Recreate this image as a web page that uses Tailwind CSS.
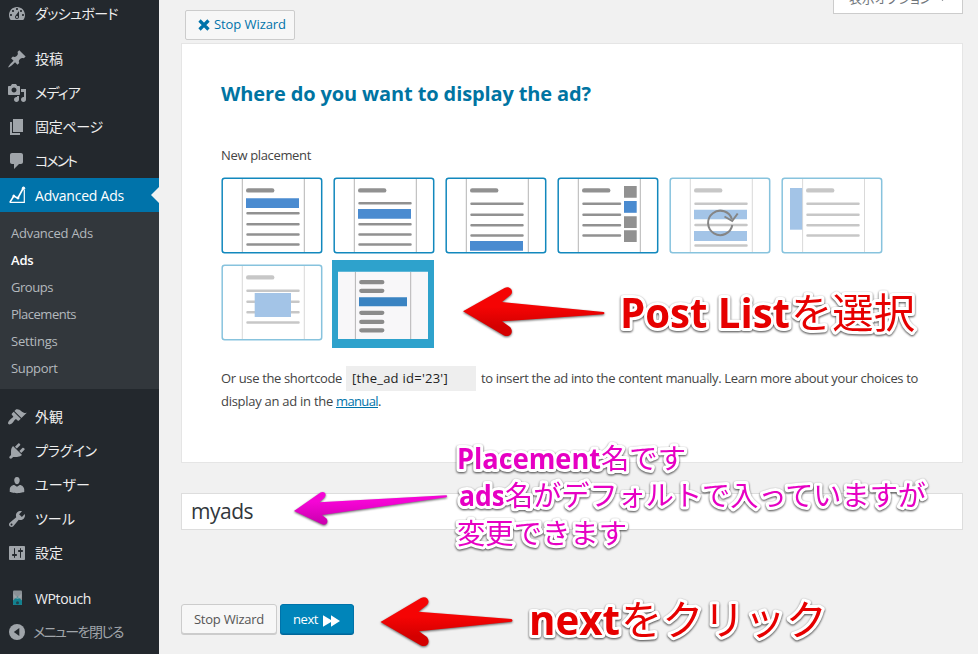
<!DOCTYPE html>
<html lang="ja">
<head>
<meta charset="utf-8">
<title>Advanced Ads</title>
<script src="https://cdn.jsdelivr.net/npm/@tailwindcss/browser@4"></script>
</head>
<body class="w-[978px] h-[654px] overflow-hidden bg-[#f1f1f1] font-['Open_Sans','Noto_Sans_CJK_JP',sans-serif] text-[13px] text-[#444]">
<div class="relative flex w-[978px] h-[654px] overflow-hidden">

  <nav class="w-[159px] h-[654px] shrink-0 bg-[#23282d] overflow-hidden text-[14px] text-[#eee] whitespace-nowrap">
    <a class="flex items-center h-[34px] -mt-[3px] pl-[7px] gap-2"><svg class="w-5 h-5 shrink-0 fill-[#a0a5aa]" viewBox="0 0 20 20"><path fill-rule="evenodd" d="M3.76 16h12.48c1.1-1.37 1.76-3.11 1.76-5 0-4.42-3.58-8-8-8s-8 3.58-8 8c0 1.89.66 3.63 1.76 5zM10 4c.55 0 1 .45 1 1s-.45 1-1 1-1-.45-1-1 .45-1 1-1zM6 6c.55 0 1 .45 1 1s-.45 1-1 1-1-.45-1-1 .45-1 1-1zm8 0c.55 0 1 .45 1 1s-.45 1-1 1-1-.45-1-1 .45-1 1-1zm-5.37 5.55L12 7v6c0 1.1-.9 2-2 2s-2-.9-2-2c0-.57.24-1.08.63-1.45zM4 10c.55 0 1 .45 1 1s-.45 1-1 1-1-.45-1-1 .45-1 1-1zm12 0c.55 0 1 .45 1 1s-.45 1-1 1-1-.45-1-1 .45-1 1-1zm-5 3c0-.55-.45-1-1-1s-1 .45-1 1 .45 1 1 1 1-.45 1-1z"/></svg><span class="pb-[2px]" data-w="83">ダッシュボード</span></a>
    <a class="flex items-center h-[34px] mt-[11px] pl-[7px] gap-2"><svg class="w-5 h-5 shrink-0 fill-[#a0a5aa]" viewBox="0 0 20 20"><path d="M10.44 3.02l1.82-1.82 6.36 6.35-1.83 1.82c-1.05-.68-2.48-.57-3.41.36l-.75.75c-.92.93-1.04 2.35-.35 3.41l-1.83 1.82-2.41-2.41-2.8 2.79c-.42.42-3.38 2.71-3.8 2.29s1.86-3.39 2.28-3.81l2.79-2.79L4.1 9.36l1.83-1.82c1.05.69 2.48.57 3.4-.36l.75-.75c.93-.92 1.05-2.35.36-3.41z"/></svg><span class="pb-[2px]" data-w="28">投稿</span></a>
    <a class="flex items-center h-[34px] pl-[7px] gap-2"><svg class="w-5 h-5 shrink-0 fill-[#a0a5aa]" viewBox="0 0 20 20"><path fill-rule="evenodd" d="M13 11V4c0-.55-.45-1-1-1h-1.67L9 1H5L3.67 3H2c-.55 0-1 .45-1 1v7c0 .55.45 1 1 1h10c.55 0 1-.45 1-1zM7 4.5c1.38 0 2.5 1.12 2.5 2.5S8.38 9.5 7 9.5 4.5 8.38 4.5 7 5.62 4.5 7 4.5zM14 6h5v10.5c0 1.38-1.12 2.5-2.5 2.5S14 17.88 14 16.5s1.12-2.5 2.5-2.5c.17 0 .34.02.5.05V9h-3V6zm-4 8.05V13h2v3.5c0 1.38-1.12 2.5-2.5 2.5S7 17.88 7 16.5 8.12 14 9.5 14c.17 0 .34.02.5.05z"/></svg><span class="pb-[2px]" data-w="45">メディア</span></a>
    <a class="flex items-center h-[34px] pl-[7px] gap-2"><svg class="w-5 h-5 shrink-0 fill-[#a0a5aa]" viewBox="0 0 20 20"><path d="M6 15V2h10v13H6zm-1 1h8v2H3V5h2v11z"/></svg><span class="pb-[2px]" data-w="68">固定ページ</span></a>
    <a class="flex items-center h-[34px] pl-[7px] gap-2"><svg class="w-5 h-5 shrink-0 fill-[#a0a5aa]" viewBox="0 0 20 20"><path d="M5 2h9c1.1 0 2 .9 2 2v7c0 1.1-.9 2-2 2h-2l-5 5v-5H5c-1.1 0-2-.9-2-2V4c0-1.1.9-2 2-2z"/></svg><span class="pb-[2px]" data-w="41">コメント</span></a>
    <a class="relative flex items-center h-[34px] pl-[7px] gap-2 bg-[#0073aa] text-white"><svg class="w-5 h-5 shrink-0" viewBox="0 0 20 20" fill="none" stroke="#fff"><path stroke-width="1.6" d="M3 17.2 6.8 11l4 2.2L15.8 4"/><path stroke-width="1.2" d="M2.6 17.4H17.3V5"/><circle cx="6.8" cy="11" r="1" fill="#fff"/><circle cx="11" cy="13" r="1" fill="#fff"/><circle cx="16.5" cy="3.3" r="1.3" fill="#fff"/></svg><span data-w="89">Advanced Ads</span>
      <i class="absolute right-0 top-[9px] border-y-8 border-r-8 border-y-transparent border-r-[#f1f1f1]"></i></a>
    <div class="h-[177px] pt-2 pl-[11px] bg-[#32373c] text-[13px] text-[#b4b9be] leading-[27px]">
      <div><span data-w="82">Advanced Ads</span></div>
      <div class="font-semibold text-white"><span data-w="22.5">Ads</span></div>
      <div><span data-w="42">Groups</span></div>
      <div><span data-w="65">Placements</span></div>
      <div><span data-w="46.5">Settings</span></div>
      <div><span data-w="46.5">Support</span></div>
    </div>
    <a class="flex items-center h-[34px] mt-[11px] pl-[7px] gap-2"><svg class="w-5 h-5 shrink-0 fill-[#a0a5aa]" viewBox="0 0 20 20"><path d="M14.48 11.06L7.41 3.99l1.5-1.5c.5-.56 2.3-.47 3.51.32 1.21.8 1.43 1.28 2.91 2.1 1.18.64 2.45 1.26 4.45.85zm-.71.71L6.7 4.7 4.93 6.47c-.39.39-.39 1.02 0 1.41l1.06 1.06c.39.39.39 1.03 0 1.42-.6.6-1.43 1.11-2.21 1.69-.35.26-.7.53-1.01.84C1.43 14.23.4 16.08 1.4 17.07c.99 1 2.84-.03 4.18-1.36.31-.31.58-.66.85-1.02.57-.78 1.08-1.61 1.69-2.21.39-.39 1.02-.39 1.41 0l1.06 1.06c.39.39 1.02.39 1.41 0z"/></svg><span class="pb-[2px]" data-w="28">外観</span></a>
    <a class="flex items-center h-[34px] pl-[7px] gap-2"><svg class="w-5 h-5 shrink-0 fill-[#a0a5aa]" viewBox="0 0 20 20"><path d="M13.11 4.36L9.87 7.6 8 5.73l3.24-3.24c.35-.34 1.05-.2 1.56.32.52.51.66 1.21.31 1.55zm-8 1.77l.91-1.12 9.01 9.01-1.19.84c-.71.71-2.63 1.16-3.82 1.16H6.14L4.9 17.26c-.59.59-1.54.59-2.12 0-.59-.58-.59-1.53 0-2.12l1.24-1.24v-3.88c0-1.13.4-3.19 1.09-3.89zm7.26 3.97l3.24-3.24c.34-.35 1.04-.21 1.55.31.52.51.66 1.21.31 1.55l-3.24 3.25z"/></svg><span class="pb-[2px]" data-w="62">プラグイン</span></a>
    <a class="flex items-center h-[34px] pl-[7px] gap-2"><svg class="w-5 h-5 shrink-0 fill-[#a0a5aa]" viewBox="0 0 20 20"><path d="M10 9.25c-2.27 0-2.73-3.44-2.73-3.44C7 4.02 7.82 2 9.97 2c2.16 0 2.98 2.02 2.71 3.81 0 0-.41 3.44-2.68 3.44zm0 2.57L12.72 10c2.39 0 4.52 2.33 4.52 4.53v2.49s-3.65 1.13-7.24 1.13c-3.65 0-7.24-1.13-7.24-1.13v-2.49c0-2.25 1.94-4.48 4.47-4.48z"/></svg><span class="pb-[2px]" data-w="55">ユーザー</span></a>
    <a class="flex items-center h-[34px] pl-[7px] gap-2"><svg class="w-5 h-5 shrink-0 fill-[#a0a5aa]" viewBox="0 0 20 20"><path fill-rule="evenodd" d="M16.68 9.77c-1.34 1.34-3.3 1.67-4.95.99l-5.41 6.52c-.99.99-2.59.99-3.58 0s-.99-2.59 0-3.57l6.52-5.42c-.68-1.65-.35-3.61.99-4.95 1.28-1.28 3.12-1.62 4.72-1.06l-2.89 2.89 2.82 2.82 2.86-2.87c.53 1.58.18 3.39-1.08 4.65zM3.81 16.21c.4.39 1.04.39 1.43 0 .4-.4.4-1.04 0-1.43-.39-.4-1.03-.4-1.43 0-.39.39-.39 1.03 0 1.43z"/></svg><span class="pb-[2px]" data-w="40">ツール</span></a>
    <a class="flex items-center h-[34px] pl-[7px] gap-2"><svg class="w-5 h-5 shrink-0 fill-[#a0a5aa]" viewBox="0 0 20 20"><path fill-rule="evenodd" d="M18 16V4c0-.55-.45-1-1-1H3c-.55 0-1 .45-1 1v12c0 .55.45 1 1 1h14c.55 0 1-.45 1-1zM8 11h1c.55 0 1 .45 1 1s-.45 1-1 1H8v1.5c0 .28-.22.5-.5.5s-.5-.22-.5-.5V13H6c-.55 0-1-.45-1-1s.45-1 1-1h1V5.5c0-.28.22-.5.5-.5s.5.22.5.5V11zm5-2h-1c-.55 0-1-.45-1-1s.45-1 1-1h1V5.5c0-.28.22-.5.5-.5s.5.22.5.5V7h1c.55 0 1 .45 1 1s-.45 1-1 1h-1v5.5c0 .28-.22.5-.5.5s-.5-.22-.5-.5V9z"/></svg><span class="pb-[2px]" data-w="28">設定</span></a>
    <a class="flex items-center h-[34px] mt-[11px] pl-[7px] gap-2"><svg class="w-5 h-5 shrink-0" viewBox="0 0 20 20"><rect x="6" y="2.5" width="9" height="14.5" rx="1" fill="#8b9196"/><path fill="#12818f" d="M6 12.5 10.5 8.5 15 12.5V16a1 1 0 0 1-1 1H7a1 1 0 0 1-1-1z"/><path fill="#a8b0b4" d="M6.5 5.5 10.5 9.5l4-4v4l-4 1.5-4-1.5z" opacity=".6"/><circle cx="10.5" cy="14.8" r="1.5" fill="#23404a"/></svg><span data-w="56">WPtouch</span></a>
    <a class="flex items-center h-[34px] pl-[7px] gap-[6px] text-[#a0a5aa]"><svg class="w-5 h-5 shrink-0" viewBox="0 0 20 20"><circle cx="10" cy="10" r="8" fill="#a0a5aa"/><path fill="#23282d" d="M12.3 6v8L6.8 10z"/></svg><span class="pb-[2px]" data-w="90">メニューを閉じる</span></a>
  </nav>

  <main class="relative flex-1 pl-[22px] pr-[15px]">
    <div class="absolute right-[15px] -top-[16px] w-[130px] h-[30px] border border-[#ccc] bg-white pl-[15px] flex items-center text-[#72777c] whitespace-nowrap"><span data-w="82">表示オプション</span><svg class="ml-[7px] w-[9px] h-[6px]" viewBox="0 0 9 6"><path d="M1 1h7L4.500 5z" fill="#72777c"/></svg></div>
    <div class="pt-[10px] pl-1">
      <a class="flex items-center w-[110px] h-[30px] pl-3 gap-1 rounded-[2px] border border-[#ccc] bg-[#f7f7f7] text-[#0073aa] whitespace-nowrap"><svg class="w-3 h-3 shrink-0" viewBox="0 0 12 12"><path d="M1.500 1.500l9 9M10.500 1.500l-9 9" stroke="#0073aa" stroke-width="3.200"/></svg><span data-w="72">Stop Wizard</span></a>
    </div>

    <section class="mt-[3px] h-[420px] w-[782px] border border-[#e5e5e5] bg-white pl-[39px] pt-[35px] whitespace-nowrap">
      <h2 class="text-[20px] leading-[30px] font-bold text-[#0074a2]"><span data-w="370">Where do you want to display the ad?</span></h2>
      <p class="mt-[36px] leading-5"><span data-w="90">New placement</span></p>
      <div class="mt-3 flex flex-wrap gap-[10px] w-[670px]">
        <svg class="w-[102px] h-[77px]" viewBox="0 0 102 77"><rect x="1.200" y="1.200" width="99.500" height="74.500" rx="2.500" fill="#fff" stroke="#1288bd" stroke-width="1.500"/><path d="M21.300 2v73M83.300 2v73" stroke="#b5b5b5"/><g stroke="#919191" stroke-linecap="round"><path stroke-width="4.400" d="M27.200 13.400h24"/><path stroke-width="2.500" d="M26.500 36.300h51M26.500 47.300h51M26.500 57.600h51M26.500 67.600h51"/></g><path fill="#4a8bd0" d="M25 21.300h53v9.700H25z"/></svg>
        <svg class="w-[102px] h-[77px]" viewBox="0 0 102 77"><rect x="1.200" y="1.200" width="99.500" height="74.500" rx="2.500" fill="#fff" stroke="#1288bd" stroke-width="1.500"/><path d="M21.300 2v73M83.300 2v73" stroke="#b5b5b5"/><g stroke="#919191" stroke-linecap="round"><path stroke-width="4.400" d="M27.200 13.400h24"/><path stroke-width="2.500" d="M26.500 26.200h51M26.500 47.300h51M26.500 57.600h51M26.500 67.600h51"/></g><path fill="#4a8bd0" d="M25 32h53v9.700H25z"/></svg>
        <svg class="w-[102px] h-[77px]" viewBox="0 0 102 77"><rect x="1.200" y="1.200" width="99.500" height="74.500" rx="2.500" fill="#fff" stroke="#1288bd" stroke-width="1.500"/><path d="M21.300 2v73M83.300 2v73" stroke="#b5b5b5"/><g stroke="#919191" stroke-linecap="round"><path stroke-width="4.400" d="M27.200 13.400h24"/><path stroke-width="2.500" d="M26.500 26.700h51M26.500 37.700h51M26.500 48.300h51M26.500 58.400h51"/></g><path fill="#4a8bd0" d="M25 64h53v9.700H25z"/></svg>
        <svg class="w-[102px] h-[77px]" viewBox="0 0 102 77"><rect x="1.200" y="1.200" width="99.500" height="74.500" rx="2.500" fill="#fff" stroke="#1288bd" stroke-width="1.500"/><path d="M21.300 2v73M83.300 2v73" stroke="#b5b5b5"/><g stroke="#919191" stroke-linecap="round"><path stroke-width="4.400" d="M27.200 13.400h24"/><path stroke-width="2.500" d="M26.500 26.700h36.500M26.500 37.700h36.500M26.500 48.300h36.500M26.500 58.400h36.500"/></g><path fill="#919191" d="M67 9h12.700v11.800H67zM67 39.300h12.700v11.800H67zM67 53.300h12.700v11.800H67z"/><path fill="#4a8bd0" d="M67 24h12.700v11.800H67z"/></svg>
        <svg class="w-[102px] h-[77px]" viewBox="0 0 102 77"><g opacity=".5"><rect x="1.200" y="1.200" width="99.500" height="74.500" rx="2.500" fill="#fff" stroke="#1288bd" stroke-width="1.500"/><path d="M21.300 2v73M83.300 2v73" stroke="#b5b5b5"/><g stroke="#919191" stroke-linecap="round"><path stroke-width="4.400" d="M27.200 13.400h24"/><path stroke-width="2.500" d="M26.500 26.700h51M26.500 48h51M26.500 68.500h51"/></g><path fill="#4a8bd0" d="M25 32.700h53v9.500H25zM25 54h53v10H25z"/></g><g fill="none" stroke="#858585" stroke-width="2"><path d="M63.300 48A12.200 12.200 0 1 1 63 42.500"/><path d="M55.500 39.500l7.700 4.500 5.500-7.500"/></g></svg>
        <svg class="w-[102px] h-[77px] opacity-50" viewBox="0 0 102 77"><rect x="1.200" y="1.200" width="99.500" height="74.500" rx="2.500" fill="#fff" stroke="#1288bd" stroke-width="1.500"/><path d="M21.600 2v73M83.500 2v73" stroke="#b5b5b5"/><g stroke="#919191" stroke-linecap="round"><path stroke-width="4.400" d="M27.200 13.400h24"/><path stroke-width="2.500" d="M26.500 26.700h51M26.500 37.700h51M26.500 48.300h51M26.500 58.400h51"/></g><path fill="#4a8bd0" d="M9 11h12.200v41.700H9z"/></svg>
        <svg class="w-[102px] h-[77px] opacity-50" viewBox="0 0 102 77"><rect x="1.200" y="1.200" width="99.500" height="74.500" rx="2.500" fill="#fff" stroke="#1288bd" stroke-width="1.500"/><path d="M21.300 2v73M83.300 2v73" stroke="#b5b5b5"/><g stroke="#919191" stroke-linecap="round"><path stroke-width="4.400" d="M27.200 13.400h24"/><path stroke-width="2.500" d="M26.500 26.700h51M26.500 37.700h51M26.500 48.300h51M26.500 58.400h51"/></g><path fill="#4a8bd0" d="M33.700 29H70v24H33.700z"/></svg>
        <svg class="w-[102px] h-[77px] overflow-visible" viewBox="0 0 102 77"><path fill="#2ea2cc" d="M-1-4h102v88H-1z"/><path fill="#f8f7f9" d="M5 7.700h90V75H5z"/><path d="M22.400 8v67M77.700 8v67" stroke="#b5b3b5"/><g stroke="#8b8b8b" stroke-width="4.300" stroke-linecap="round"><path d="M28.300 18.200h21M28.300 26.800h21M28.300 48.800h21M28.300 57.900h21M28.300 66.300h21"/></g><path fill="#3a83c2" d="M26 33.300h48v9H26z"/></svg>
      </div>
      <div class="mt-[25px] flex items-center h-[25px]"><span data-w="121">Or use the shortcode</span><span class="ml-1 mr-[5px] w-[130px] h-[25px] pl-[6px] leading-[25px] bg-[#eee] text-[#222]"><span data-w="96">[the_ad id='23']</span></span><span data-w="437">to insert the ad into the content manually. Learn more about your choices to</span></div>
      <div class="leading-5 flex"><span class="mr-[3px]" data-w="112">display an ad in the</span><a class="underline text-[#0073aa]"><span data-w="42">manual</span></a>.</div>
    </section>

    <div class="mt-[30px] w-[782px] h-[37px] border border-[#ddd] bg-white pl-[9px] flex items-center text-[21px] text-[#32373c]"><span data-w="62">myads</span></div>

    <div class="mt-[74px] flex gap-[3px] whitespace-nowrap">
      <button class="w-[96px] h-[30px] pt-px rounded-[3px] border border-[#ccc] bg-[#f7f7f7] text-[#555] shadow-[0_1px_0_#ccc]"><span data-w="70">Stop Wizard</span></button>
      <button class="w-[74px] h-[30px] pt-px rounded-[3px] border border-[#0073aa] bg-[#0085ba] text-white shadow-[0_1px_0_#006799] flex items-center pl-3 gap-[5px]"><span data-w="25">next</span><svg class="w-[17px] h-3 mt-[2px]" viewBox="0 0 17 12"><path fill="#fff" d="M0 .3 8 5V.3L17 6 8 11.700V7L0 11.700z"/></svg></button>
    </div>
  </main>

  <svg class="absolute left-0 top-0 w-[978px] h-[654px] pointer-events-none" viewBox="0 0 978 654">
    <defs>
      <linearGradient id="red" x1="0" y1="0" x2="0" y2="1"><stop offset=".4" stop-color="#f50404"/><stop offset=".8" stop-color="#d40000"/></linearGradient>
      <linearGradient id="pink" x1="0" y1="0" x2="0" y2="1"><stop offset=".3" stop-color="#f505d5"/><stop offset=".9" stop-color="#cf00b2"/></linearGradient>
    </defs>
    <g class="drop-shadow-[0_1px_1px_rgba(0,0,0,0.6)]">
      <path fill="url(#red)" d="M463 311.300 504.500 288C510 285 514.500 291.500 510.500 295L502 302 603.500 312Q605.500 313 603.500 314.300L502 321.300 510 327C514.500 332 510 338 504 335.500Z"/>
      <path fill="url(#red)" d="M380.500 622 421 598C426.500 595 431 601 427 605L418.500 611.800 511.500 619Q513.500 620.500 511.500 621.700L419 631.300 427 637C431 642.500 427 648 421 645.500Z"/>
      <path fill="url(#pink)" d="M294 511 320.500 492.500C324 490.500 327.500 494 324.500 497.500L319.500 502.300 446.500 495.200Q447.500 496.200 446.500 497.200L322 515 326.500 518.500C329 522 326 526 322 524.300Z"/>
    </g>
    <g class="[paint-order:stroke] drop-shadow-[0_1px_1px_rgba(0,0,0,0.75)]" stroke="#fff" stroke-width="6" stroke-linejoin="round">
      <g class="text-[41px]" fill="#e60000">
        <text class="font-bold" x="620" y="328" textLength="170" lengthAdjust="spacingAndGlyphs">Post List</text>
        <text class="font-['Noto_Sans_CJK_JP',sans-serif] font-normal" x="791" y="328" textLength="124" lengthAdjust="spacingAndGlyphs">を選択</text>
        <text class="font-bold" x="529" y="635" textLength="91" lengthAdjust="spacingAndGlyphs">next</text>
        <text class="font-['Noto_Sans_CJK_JP',sans-serif] font-normal" x="621" y="635" textLength="206" lengthAdjust="spacingAndGlyphs">をクリック</text>
      </g>
      <g class="text-[28px]" fill="#e600c3">
        <text class="font-bold" x="457" y="469" textLength="144" lengthAdjust="spacingAndGlyphs">Placement</text>
        <text class="font-['Noto_Sans_CJK_JP',sans-serif] font-normal" x="601" y="469" textLength="85" lengthAdjust="spacingAndGlyphs">名です</text>
        <text class="font-bold" x="459" y="506" textLength="46" lengthAdjust="spacingAndGlyphs">ads</text>
        <text class="font-['Noto_Sans_CJK_JP',sans-serif] font-normal" x="505" y="506" textLength="421" lengthAdjust="spacingAndGlyphs">名がデフォルトで入っていますが</text>
        <text class="font-['Noto_Sans_CJK_JP',sans-serif] font-normal" x="457" y="544" textLength="170" lengthAdjust="spacingAndGlyphs">変更できます</text>
      </g>
    </g>
  </svg>
</div>
<script>
// Spread each label's letters so that it fills its data-w width.
function fitLabels() {
  document.querySelectorAll('[data-w]').forEach(function (el) {
    el.style.letterSpacing = '0px';
    if (/[\u3040-\u30ff]/.test(el.textContent)) el.style.fontFeatureSettings = '"palt"';
    var r = document.createRange();
    r.selectNodeContents(el);
    var w = r.getBoundingClientRect().width;
    el.style.letterSpacing = ((+el.dataset.w - w) / el.textContent.length) + 'px';
  });
}
fitLabels();
window.addEventListener('load', function () {
  fitLabels();
  document.fonts.ready.then(fitLabels);
  requestAnimationFrame(fitLabels);
});
</script>
</body>
</html>
